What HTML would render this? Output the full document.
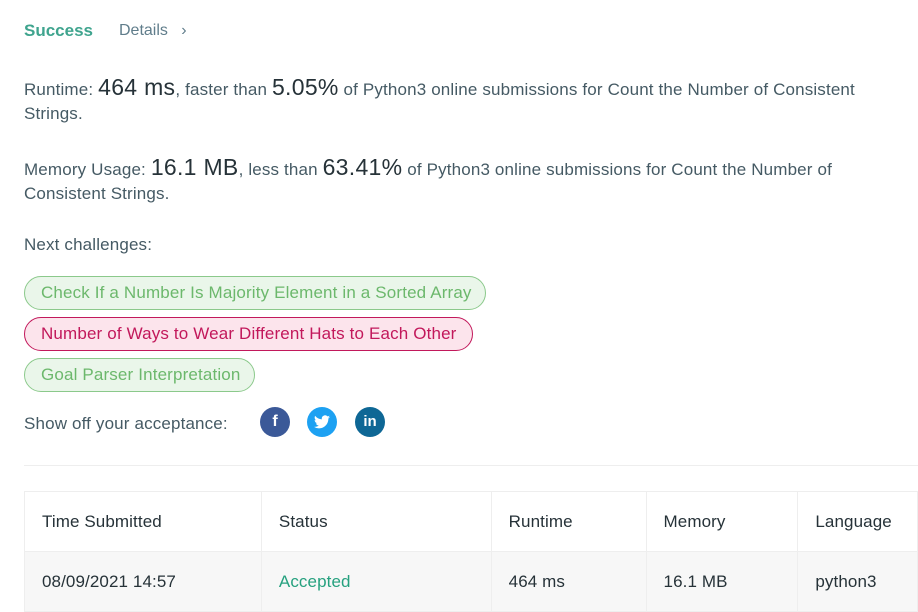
<!DOCTYPE html>
<html><head><meta charset="utf-8"><style>
*{margin:0;padding:0;box-sizing:border-box}
body{width:918px;height:610px;overflow:hidden;background:#fff;font-family:"Liberation Sans",sans-serif;color:#546e7a;position:relative}
.a{position:absolute;white-space:nowrap}
.t{font-size:17px;color:#455a64;letter-spacing:0.15px}
.big{font-size:23px;color:#263238;letter-spacing:0.3px}
.pill{position:absolute;left:24px;height:34px;border-radius:17px;border:1px solid #8bc98b;background:#eaf6ea;color:#6cb86c;font-size:17px;line-height:32px;padding-left:16px;white-space:nowrap;letter-spacing:0.15px}
.pink{border-color:#c2185b;background:#fce4ec;color:#c2185b}
.ic{position:absolute;top:407px;width:30px;height:30px;border-radius:50%;color:#fff;font-weight:bold;text-align:center;line-height:30px;font-size:16px}
table{position:absolute;left:24px;top:491px;border-collapse:collapse;font-size:17px;color:#263238}
td{border:1px solid #eee;padding-left:17px;height:60px;letter-spacing:0.1px}
tr.b td{background:#f7f7f7}
</style></head><body>
<div class="a" style="left:24px;top:21px;font-size:17px;font-weight:bold;color:#3fa48e">Success</div>
<div class="a" style="left:119px;top:22px;font-size:16px;color:#607d8b">Details&nbsp;&nbsp; ›</div>
<div class="a t" style="left:24px;top:74px">Runtime: <span class="big">464 ms</span>, faster than <span class="big">5.05%</span> of Python3 online submissions for Count the Number of Consistent</div>
<div class="a t" style="left:24px;top:104px">Strings.</div>
<div class="a t" style="left:24px;top:154px">Memory Usage: <span class="big">16.1 MB</span>, less than <span class="big">63.41%</span> of Python3 online submissions for Count the Number of</div>
<div class="a t" style="left:24px;top:184px">Consistent Strings.</div>
<div class="a t" style="left:24px;top:235px">Next challenges:</div>
<div class="pill" style="top:276px;width:462px">Check If a Number Is Majority Element in a Sorted Array</div>
<div class="pill pink" style="top:317px;width:449px">Number of Ways to Wear Different Hats to Each Other</div>
<div class="pill" style="top:358px;width:231px">Goal Parser Interpretation</div>
<div class="a t" style="left:24px;top:414px">Show off your acceptance:</div>
<div class="ic" style="left:260px;background:#3b5998">f</div>
<div class="ic" style="left:307px;background:#1da1f2;font-size:14px">
<svg width="16" height="14" viewBox="0 0 24 20" style="margin-top:8px"><path fill="#fff" d="M24 2.4a10 10 0 0 1-2.8.8A5 5 0 0 0 23.3.4a10 10 0 0 1-3.1 1.2A4.9 4.9 0 0 0 11.8 6 14 14 0 0 1 1.7.9a4.9 4.9 0 0 0 1.5 6.6A4.9 4.9 0 0 1 1 6.9a4.9 4.9 0 0 0 3.9 4.9 5 5 0 0 1-2.2.1 4.9 4.9 0 0 0 4.6 3.4A9.9 9.9 0 0 1 0 17.3 14 14 0 0 0 7.5 19.5c9 0 14-7.5 14-14v-.6A10 10 0 0 0 24 2.4z"/></svg></div>
<div class="ic" style="left:355px;background:#0e6795;font-size:15px">in</div>
<div class="a" style="left:24px;top:465px;width:894px;height:1px;background:#eee"></div>
<table>
<tr><td style="width:239px">Time Submitted</td><td style="width:232px">Status</td><td style="width:156px">Runtime</td><td style="width:153px">Memory</td><td style="width:120px">Language</td></tr>
<tr class="b"><td>08/09/2021 14:57</td><td style="color:#26a17f">Accepted</td><td>464 ms</td><td>16.1 MB</td><td>python3</td></tr>
</table>
</body></html>
